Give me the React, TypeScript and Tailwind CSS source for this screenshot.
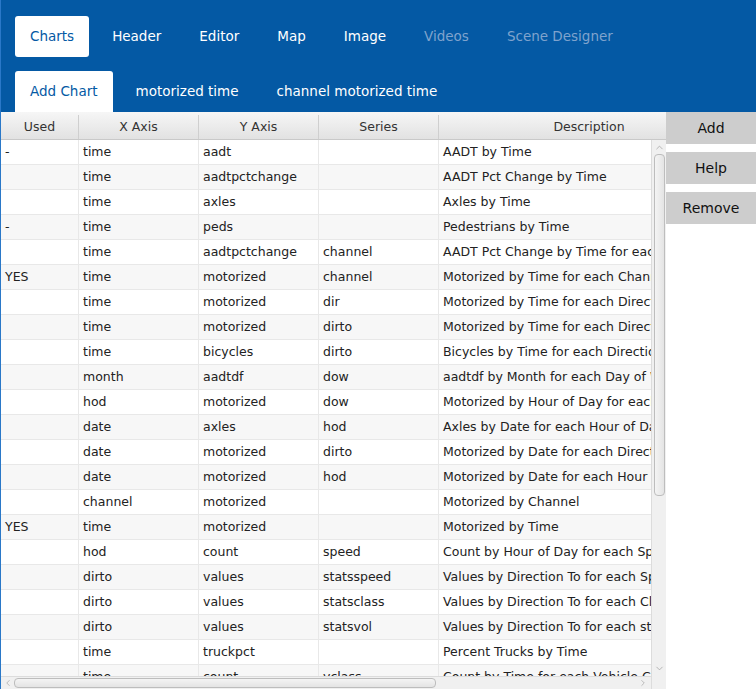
import { ChevronUp, ChevronDown, ChevronLeft, ChevronRight } from 'lucide-react';

interface ChartRow {
  used: string;
  x: string;
  y: string;
  series: string;
  desc: string;
}

const rows: ChartRow[] = [
  { used: '-', x: 'time', y: 'aadt', series: '', desc: 'AADT by Time' },
  { used: '', x: 'time', y: 'aadtpctchange', series: '', desc: 'AADT Pct Change by Time' },
  { used: '', x: 'time', y: 'axles', series: '', desc: 'Axles by Time' },
  { used: '-', x: 'time', y: 'peds', series: '', desc: 'Pedestrians by Time' },
  { used: '', x: 'time', y: 'aadtpctchange', series: 'channel', desc: 'AADT Pct Change by Time for each Channel' },
  { used: 'YES', x: 'time', y: 'motorized', series: 'channel', desc: 'Motorized by Time for each Channel' },
  { used: '', x: 'time', y: 'motorized', series: 'dir', desc: 'Motorized by Time for each Direction' },
  { used: '', x: 'time', y: 'motorized', series: 'dirto', desc: 'Motorized by Time for each Direction To' },
  { used: '', x: 'time', y: 'bicycles', series: 'dirto', desc: 'Bicycles by Time for each Direction To' },
  { used: '', x: 'month', y: 'aadtdf', series: 'dow', desc: 'aadtdf by Month for each Day of Week' },
  { used: '', x: 'hod', y: 'motorized', series: 'dow', desc: 'Motorized by Hour of Day for each Day of Week' },
  { used: '', x: 'date', y: 'axles', series: 'hod', desc: 'Axles by Date for each Hour of Day' },
  { used: '', x: 'date', y: 'motorized', series: 'dirto', desc: 'Motorized by Date for each Direction To' },
  { used: '', x: 'date', y: 'motorized', series: 'hod', desc: 'Motorized by Date for each Hour of Day' },
  { used: '', x: 'channel', y: 'motorized', series: '', desc: 'Motorized by Channel' },
  { used: 'YES', x: 'time', y: 'motorized', series: '', desc: 'Motorized by Time' },
  { used: '', x: 'hod', y: 'count', series: 'speed', desc: 'Count by Hour of Day for each Speed' },
  { used: '', x: 'dirto', y: 'values', series: 'statsspeed', desc: 'Values by Direction To for each Speed Stat' },
  { used: '', x: 'dirto', y: 'values', series: 'statsclass', desc: 'Values by Direction To for each Class Stat' },
  { used: '', x: 'dirto', y: 'values', series: 'statsvol', desc: 'Values by Direction To for each stat' },
  { used: '', x: 'time', y: 'truckpct', series: '', desc: 'Percent Trucks by Time' },
  { used: '', x: 'time', y: 'count', series: 'vclass', desc: 'Count by Time for each Vehicle Class' },
];

const mainTabs = ['Charts', 'Header', 'Editor', 'Map', 'Image', 'Videos', 'Scene Designer'];
const chartTabs = ['Add Chart', 'motorized time', 'channel motorized time'];

const font = { fontFamily: '"DejaVu Sans", "Open Sans", sans-serif' };

const App = () => {
  return (
    <div className="w-[756px] h-[689px] overflow-hidden bg-white flex flex-col border-l border-[#2a78c8]" style={font}>
      {/* Blue tab header */}
      <div className="bg-[#0459a4] pt-4 pl-[14px] flex flex-col gap-[14px]">
        <div className="flex gap-2 h-[41px]">
          {mainTabs.map((t, i) => (
            <div
              key={t}
              className={`px-[15px] flex items-center text-[13.5px] rounded-[3px] ${
                i === 0
                  ? 'bg-white text-[#0459a4]'
                  : i >= 5
                  ? 'text-[#7fa3cd]'
                  : 'text-white'
              }`}
            >
              {t}
            </div>
          ))}
        </div>
        <div className="flex gap-2 h-[41px]">
          {chartTabs.map((t, i) => (
            <div
              key={t}
              className={`px-[15px] flex items-center text-[13.5px] rounded-t-[3px] ${
                i === 0 ? 'bg-white text-[#0459a4]' : 'text-white'
              }`}
            >
              {t}
            </div>
          ))}
        </div>
      </div>

      <div className="flex flex-1 min-h-0">
        {/* Table with scrollbars */}
        <div className="w-[665px] flex flex-col min-h-0">
          <div className="h-[28px] pt-[3px] flex overflow-hidden shrink-0 border-b border-[#c9c9c9] bg-gradient-to-b from-[#f6f6f6] to-[#e2e2e2] text-[12.5px] text-[#333]">
            <div className="w-[78px] shrink-0 flex items-center justify-center border-r border-[#cfcfcf]">Used</div>
            <div className="w-[120px] shrink-0 flex items-center justify-center border-r border-[#cfcfcf]">X Axis</div>
            <div className="w-[120px] shrink-0 flex items-center justify-center border-r border-[#cfcfcf]">Y Axis</div>
            <div className="w-[120px] shrink-0 flex items-center justify-center border-r border-[#cfcfcf]">Series</div>
            <div className="w-[300px] shrink-0 flex items-center justify-center">Description</div>
          </div>
          <div className="flex flex-1 min-h-0">
            <div className="w-[650px] overflow-hidden">
              {rows.map((r, i) => (
                <div
                  key={i}
                  className={`h-[25px] flex text-[12.5px] text-[#222] border-b border-[#e8e8e8] whitespace-nowrap ${
                    i % 2 === 1 ? 'bg-[#f7f7f7]' : 'bg-white'
                  }`}
                >
                  <div className="w-[78px] shrink-0 pl-[4px] flex items-center border-r border-[#e8e8e8]">{r.used}</div>
                  <div className="w-[120px] shrink-0 pl-[4px] flex items-center border-r border-[#e8e8e8]">{r.x}</div>
                  <div className="w-[120px] shrink-0 pl-[4px] flex items-center border-r border-[#e8e8e8]">{r.y}</div>
                  <div className="w-[120px] shrink-0 pl-[4px] flex items-center border-r border-[#e8e8e8]">{r.series}</div>
                  <div className="w-[520px] shrink-0 pl-[4px] flex items-center">{r.desc}</div>
                </div>
              ))}
            </div>
            {/* vertical scrollbar */}
            <div className="w-[15px] shrink-0 bg-[#f0f0f0] border-l border-[#dcdcdc] flex flex-col items-center">
              <ChevronUp size={11} strokeWidth={1.5} className="text-[#9a9a9a] mt-[2px]" />
              <div className="w-[11px] h-[342px] mt-[1px] rounded-[4px] border border-[#bdbdbd] bg-gradient-to-r from-[#f4f4f4] to-[#e4e4e4]" />
              <div className="flex-1" />
              <ChevronDown size={11} strokeWidth={1.5} className="text-[#9a9a9a] mb-[2px]" />
            </div>
          </div>
          {/* horizontal scrollbar */}
          <div className="h-[13px] shrink-0 flex">
            <div className="w-[650px] bg-[#f0f0f0] border-t border-[#dcdcdc] flex items-center">
              <ChevronLeft size={10} strokeWidth={1.5} className="text-[#9a9a9a] ml-[2px]" />
              <div className="w-[422px] h-[10px] ml-[1px] rounded-[4px] border border-[#bdbdbd] bg-gradient-to-b from-[#f4f4f4] to-[#e4e4e4]" />
              <div className="flex-1" />
              <ChevronRight size={10} strokeWidth={1.5} className="text-[#9a9a9a] mr-[3px]" />
            </div>
            <div className="w-[15px] bg-[#f0f0f0] border-l border-[#dcdcdc]" />
          </div>
        </div>

        {/* Action buttons */}
        <div className="flex-1 flex flex-col gap-2">
          {['Add', 'Help', 'Remove'].map((b) => (
            <div key={b} className="h-[32px] bg-[#cdcdcd] flex items-center justify-center text-[14px] text-[#111]">
              {b}
            </div>
          ))}
        </div>
      </div>
    </div>
  );
};

export default App;
